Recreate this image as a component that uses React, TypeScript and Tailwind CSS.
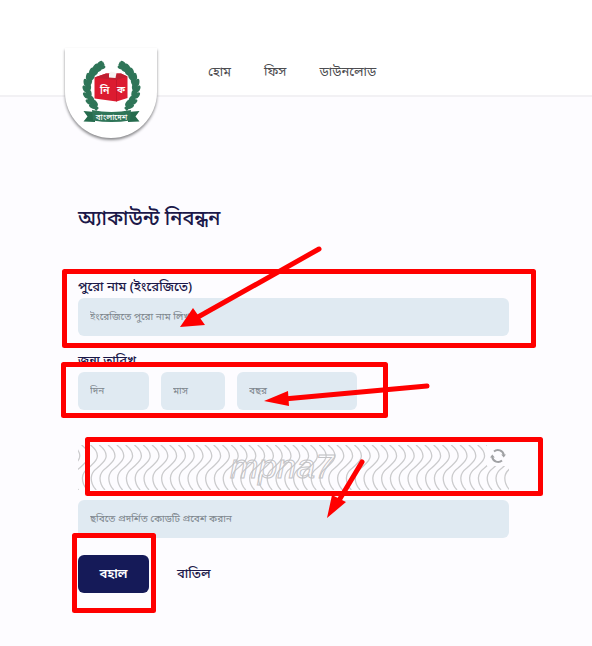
import React from "react";

const bangla = "font-['Noto_Sans_Bengali','Noto_Sans','Lohit_Bengali',sans-serif]";
const field =
  "block h-[38px] rounded-md bg-[#e0eaf2] px-3 text-[10px] text-[#6f7880] placeholder:text-[#7d868d] outline-none";

// Centre and direction, in degrees, of each pair of leaves from the tip down.
const leaves = [
  [42, 12, 150], [34, 18, 142], [27, 26, 128], [21, 36, 113], [17, 47, 98], [16, 59, 85], [18, 71, 70], [24, 83, 55], [31, 91, 45],
];

function Wreath() {
  return (
    <g fill="#2f7558">
      <path d="M50 7C27 17 15 38 16 59C17 75 25 88 37 99" fill="none" stroke="#2f7558" strokeWidth="8" />
      {leaves.map(([x, y, a]) => (
        <g key={y} transform={`translate(${x} ${y}) rotate(${a})`}>
          <ellipse cx="-3" cy="4" rx="7" ry="3.6" transform="rotate(-14)" />
          <ellipse cx="-3" cy="-4" rx="7" ry="3.6" transform="rotate(14)" />
        </g>
      ))}
    </g>
  );
}

function Logo() {
  return (
    <svg viewBox="0 0 130 128" className="h-[64px] w-[65px]" role="img" aria-label="বাংলাদেশ">
      <Wreath />
      <g transform="translate(130 0) scale(-1 1)"><Wreath /></g>
      <path d="M31 35L54 27H84L97 33V76L75 83L31 77Z" fill="#dc1b30" />
      <path d="M31 35L75 40L97 33L84 27H54Z" fill="#bf1f30" />
      <path d="M60 27L64 23L75 26L73 36L60 35Z" fill="#f6f3f3" />
      <path d="M75 40V83" stroke="#c01427" strokeWidth="1.5" />
      <text x="42" y="67" fontSize="21" fontWeight="600" fill="#fff">নি</text>
      <text x="76" y="65" fontSize="20" fontWeight="600" fill="#fff">ক</text>
      <path d="M9 102L32 104V124L9 123L17 113ZM121 102L98 104V124L121 123L113 113Z" fill="#256b4d" />
      <path d="M26 100Q65 108 104 100L102 121Q65 127 28 121Z" fill="#2f7558" />
      <text x="65" y="119" textAnchor="middle" fontSize="16" fontWeight="500" fill="#fff">বাংলাদেশ</text>
    </svg>
  );
}

function Captcha() {
  return (
    <div className="relative mt-[35px] h-[45px] overflow-hidden">
      <svg className="h-full w-full" viewBox="0 0 431 45" preserveAspectRatio="none" role="img" aria-label="mpna7">
        <defs>
          <clipPath id="codeArea"><path d="M0 0H409V21H431V45H0Z" /></clipPath>
        </defs>
        <g fill="none" stroke="#cbcbcd" strokeWidth="1.3" clipPath="url(#codeArea)">
          {Array.from({ length: 54 }, (_, i) => (
            <path key={i} d="M0 0C4 3 7 6 7 11C7 16 2 19 -2 23C-6 26 -8 29 -8 33C-8 38 -6 42 -3 45" transform={`translate(${i * 8.8 - 14} 0)`} />
          ))}
        </g>
        <g fontSize="34" fontStyle="italic" fontFamily="Liberation Sans, sans-serif" fill="none" stroke="#c3c3c6" strokeWidth="1">
          <text x="152" y="33">mpna7</text>
        </g>
      </svg>
      <button type="button" aria-label="নতুন কোড" className="absolute top-0 right-0 flex h-[21px] w-[22px] items-center justify-center">
        <svg viewBox="0 0 16 16" className="h-[16px] w-[16px]" fill="none" stroke="#a0a1a4" strokeWidth="2">
          <path d="M4 3.4A6 6 0 0 1 13.8 7M12 12.6A6 6 0 0 1 2.2 9" />
          <path d="M11.2 6.4H16L13.7 9.4ZM0 9.6H4.8L2.3 6.6Z" fill="#a0a1a4" stroke="none" />
        </svg>
      </button>
    </div>
  );
}

function Annotations() {
  return (
    <svg className="pointer-events-none absolute top-0 left-0" width="592" height="646" viewBox="0 0 592 646" aria-hidden="true">
      <g fill="none" stroke="#ff0000" strokeWidth="5" strokeLinejoin="round" strokeLinecap="round">
        <rect x="64.5" y="271.5" width="469" height="74" />
        <rect x="63.5" y="364.5" width="322" height="51" />
        <rect x="87.5" y="439.5" width="453" height="54" />
        <rect x="74.5" y="535.5" width="79" height="75" />
        <path d="M319 249L198 317M427 386L284 399M362 462L338 502" />
      </g>
      <path fill="#ff0000" d="M180 327L193 308L205 325ZM264 401L288 391L289 406ZM327 518L332 495L346 502Z" />
    </svg>
  );
}

export default function App() {
  return (
    <div className={`relative min-h-screen overflow-hidden bg-[#fdfcff] ${bangla}`}>
      <header className="flex h-[97px] items-start border-b-2 border-[#f2f1f4] bg-white pt-12 pl-[65px]">
        <a href="#home" className="flex h-[90px] w-[92px] shrink-0 justify-center rounded-b-full bg-white pt-[12px] shadow-[0_2px_3px_#88888b]">
          <Logo />
        </a>
        <nav className="ml-[51px] flex gap-[33px] pt-[15px] text-[13px] leading-5 text-[#4c4c50]">
          <a href="#home">হোম</a>
          <a href="#fees">ফিস</a>
          <a href="#download">ডাউনলোড</a>
        </nav>
      </header>
      <main className="mr-[83px] ml-[78px] pt-[107px] text-[#1b1849]">
        <h1 className="text-[20px] leading-8 font-medium">অ্যাকাউন্ট নিবন্ধন</h1>
        <form onSubmit={(e) => e.preventDefault()} className="pt-[42px]">
          <label htmlFor="name" className="block h-5 text-[13px] leading-5 font-medium">পুরো নাম (ইংরেজিতে)</label>
          <input id="name" className={`${field} w-full`} placeholder="ইংরেজিতে পুরো নাম লিখুন" />
          <fieldset className="mt-4">
            <legend className="h-5 text-[13px] leading-5 font-medium">জন্ম তারিখ</legend>
            <div className="flex gap-3">
              <input aria-label="দিন" className={`${field} w-[71px]`} placeholder="দিন" />
              <input aria-label="মাস" className={`${field} w-[64px]`} placeholder="মাস" />
              <input aria-label="বছর" className={`${field} w-[120px]`} placeholder="বছর" />
            </div>
          </fieldset>
          <Captcha />
          <input aria-label="ছবিতে প্রদর্শিত কোডটি প্রবেশ করান" className={`${field} mt-[10px] w-full`} placeholder="ছবিতে প্রদর্শিত কোডটি প্রবেশ করান" />
          <div className="mt-[17px] flex gap-7 text-[13px] font-medium">
            <button type="submit" className="h-[38px] w-[71px] rounded-md bg-[#151a58] pt-[2px] font-semibold text-white">বহাল</button>
            <button type="button" className="pt-[2px]">বাতিল</button>
          </div>
        </form>
      </main>
      <Annotations />
    </div>
  );
}
